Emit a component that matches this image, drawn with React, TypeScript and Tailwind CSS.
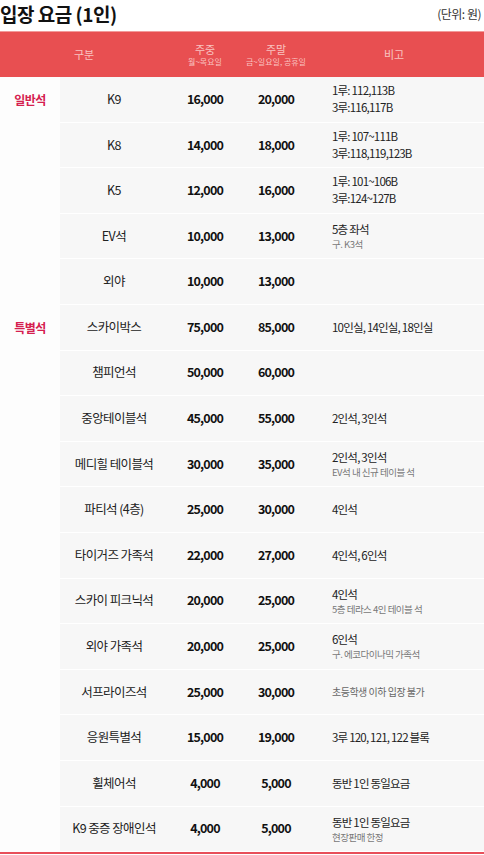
import React from "react";

type Row = {
  cat?: string;
  name: string;
  wd: string;
  we: string;
  note?: string[];
  sub?: string;
  subOnly?: boolean;
};

const rows: Row[] = [
  { cat: "일반석", name: "K9", wd: "16,000", we: "20,000", note: ["1루: 112,113B", "3루:116,117B"] },
  { name: "K8", wd: "14,000", we: "18,000", note: ["1루: 107~111B", "3루:118,119,123B"] },
  { name: "K5", wd: "12,000", we: "16,000", note: ["1루: 101~106B", "3루:124~127B"] },
  { name: "EV석", wd: "10,000", we: "13,000", note: ["5층 좌석"], sub: "구. K3석" },
  { name: "외야", wd: "10,000", we: "13,000" },
  { cat: "특별석", name: "스카이박스", wd: "75,000", we: "85,000", note: ["10인실, 14인실, 18인실"] },
  { name: "챔피언석", wd: "50,000", we: "60,000" },
  { name: "중앙테이블석", wd: "45,000", we: "55,000", note: ["2인석, 3인석"] },
  { name: "메디힐 테이블석", wd: "30,000", we: "35,000", note: ["2인석, 3인석"], sub: "EV석 내 신규 테이블 석" },
  { name: "파티석 (4층)", wd: "25,000", we: "30,000", note: ["4인석"] },
  { name: "타이거즈 가족석", wd: "22,000", we: "27,000", note: ["4인석, 6인석"] },
  { name: "스카이 피크닉석", wd: "20,000", we: "25,000", note: ["4인석"], sub: "5층 테라스 4인 테이블 석" },
  { name: "외야 가족석", wd: "20,000", we: "25,000", note: ["6인석"], sub: "구. 에코다이나믹 가족석" },
  { name: "서프라이즈석", wd: "25,000", we: "30,000", sub: "초등학생 이하 입장 불가", subOnly: true },
  { name: "응원특별석", wd: "15,000", we: "19,000", note: ["3루 120, 121, 122 블록"] },
  { name: "휠체어석", wd: "4,000", we: "5,000", note: ["동반 1인 동일요금"] },
  { name: "K9 중증 장애인석", wd: "4,000", we: "5,000", note: ["동반 1인 동일요금"], sub: "현장판매 한정" },
];

const font = { fontFamily: '"Noto Sans CJK KR", "Noto Sans", sans-serif' };

export default function App() {
  return (
    <div className="w-[484px] bg-white text-[#111]" style={font}>
      <div className="flex items-center justify-between h-[31px] pb-[4px]">
        <h1 className="text-[19px] font-bold tracking-[-0.5px] leading-none text-[#111]">입장 요금 (1인)</h1>
        <span className="text-[12px] text-[#333] tracking-[-0.5px] pr-[3px]">(단위: 원)</span>
      </div>

      <div className="flex h-[46px] items-center bg-[#e84f51] border-t border-[#f29a9a] text-[#f9c3c0]">
        <div className="w-[168px] text-center text-[11px]">구분</div>
        <div className="w-[74px] flex flex-col items-center">
          <span className="text-[11px] leading-[14px]">주중</span>
          <span className="text-[8px] leading-[11px]">월~목요일</span>
        </div>
        <div className="w-[68px] flex flex-col items-center">
          <span className="text-[11px] leading-[14px]">주말</span>
          <span className="text-[8px] leading-[11px]">금~일요일, 공휴일</span>
        </div>
        <div className="flex-1 text-center text-[11px] pr-[6px]">비고</div>
      </div>

      <div className="flex flex-col">
        {rows.map((r, i) => (
          <div key={i} className="flex h-[45.6px]">
            <div className="w-[60px] bg-[#fdfdfd] flex items-center justify-center">
              {r.cat && (
                <span className="text-[12px] font-bold text-[#d5204f] tracking-[-0.5px]">{r.cat}</span>
              )}
            </div>
            <div className="flex-1 flex items-center bg-[#f7f7f7] border-b border-white">
              <div className="w-[108px] text-center text-[12.5px] text-[#222] tracking-[-0.6px]">{r.name}</div>
              <div className="w-[74px] text-center text-[12.5px] font-bold tracking-[-0.8px]">{r.wd}</div>
              <div className="w-[68px] text-center text-[12.5px] font-bold tracking-[-0.8px]">{r.we}</div>
              <div className="flex-1 pl-[22px] flex flex-col justify-center">
                {r.note?.map((n, j) => (
                  <span key={j} className="text-[11.5px] leading-[17px] text-[#222] tracking-[-0.8px]">{n}</span>
                ))}
                {r.sub && (
                  <span
                    className={
                      r.subOnly
                        ? "text-[10px] leading-[14px] text-[#666] tracking-[-0.5px]"
                        : "text-[9.5px] leading-[13px] text-[#777] tracking-[-0.5px]"
                    }
                  >
                    {r.sub}
                  </span>
                )}
              </div>
            </div>
          </div>
        ))}
      </div>
      <div className="h-[2px] bg-[#e84f5a]" />
    </div>
  );
}
